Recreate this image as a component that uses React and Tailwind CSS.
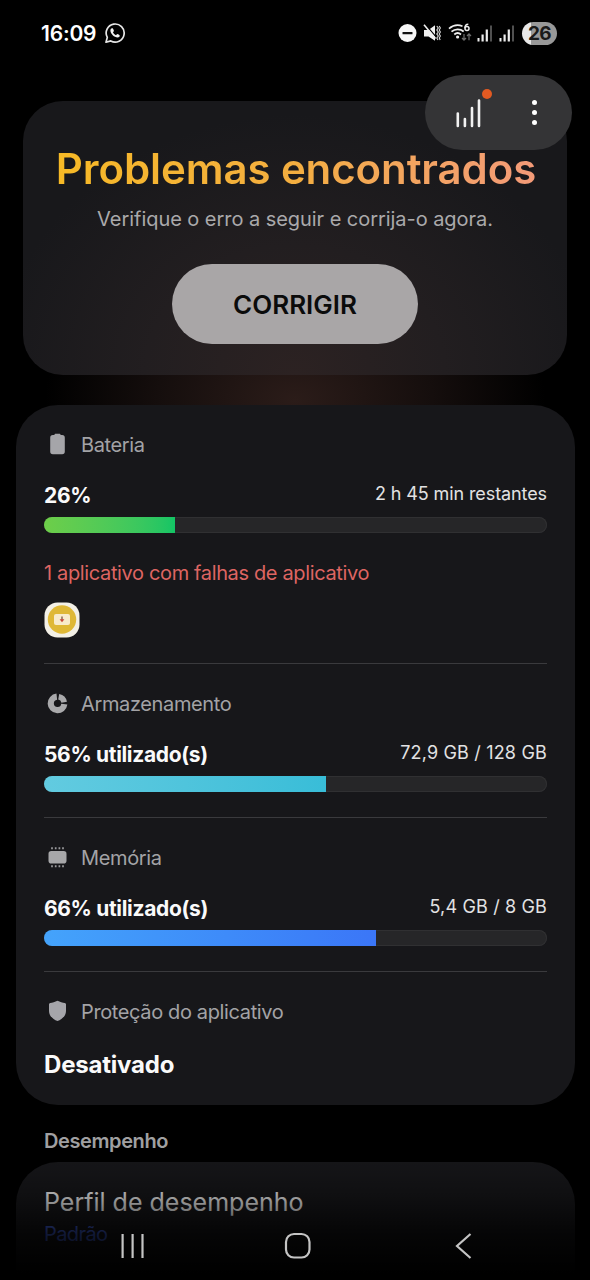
/**
 * Device care screen: status bar, issue banner, health panel and the
 * performance list that fades out under the navigation bar.
 */

function WhatsAppIcon() {
  return (
    <svg width="22" height="22" viewBox="0 0 22 22" fill="none">
      <path
        d="M2 20.2l1.3-4.8A9 9 0 1 1 6.8 18.9L2 20.2z"
        stroke="#e6e6e6"
        strokeWidth="1.7"
        strokeLinejoin="round"
      />
      <path
        d="M7.9 6.2c-.5 0-1.5.8-1.5 2.200 0 3.200 3.900 7 7.200 7 1.300 0 2.200-.9 2.200-1.700 0-.5-2-1.600-2.500-1.600-.4 0-.9 1.100-1.300 1.100-.9 0-3-2-3-2.900 0-.4.900-.8.900-1.300 0-.6-.8-2.700-1.200-2.800z"
        fill="#f2f2f2"
      />
    </svg>
  )
}

function DndIcon() {
  return (
    <svg width="19" height="19" viewBox="0 0 19 19">
      <circle cx="9.5" cy="9" r="9" fill="#f7f7f7" />
      <rect x="4.5" y="8" width="10" height="2.3" rx="0.5" fill="#111" />
    </svg>
  )
}

function MuteIcon() {
  return (
    <svg width="18" height="18" viewBox="0 0 18 18" fill="none">
      <path d="M1 6h4.500L12 1.200v15.600L5.500 12.500H1z" fill="#f0f0f0" />
      <path d="M2 0L13.500 13.500" stroke="#000" strokeWidth="1.200" />
      <path d="M1 .8L12.500 14.500" stroke="#f0f0f0" strokeWidth="1.600" />
      <path
        d="M13.800 2l1.500 2-1.500 2 1.500 2-1.500 2 1.500 2-1.500 2 1.200 2M16.200 2l1.200 2-1.200 2 1.200 2-1.200 2 1.200 2-1.200 2 1 2"
        stroke="#dcdcdc"
        strokeWidth="1.100"
      />
    </svg>
  )
}

function WifiIcon() {
  return (
    <svg width="24" height="20" viewBox="0 0 24 20" fill="none">
      <path
        d="M1 5.600C5 2.200 10 1.400 14.500 3.200M3.500 8.700c3.500-3.100 8.600-3.200 12.200-.2M6.300 11.500c2-1.800 4.700-1.800 6.700 0"
        stroke="#ededed"
        strokeWidth="1.700"
      />
      <circle cx="9.600" cy="14" r="1.600" fill="#ededed" />
      <path d="M20.300 1.200c-2 0-3.400 1.600-3.400 4" stroke="#ededed" strokeWidth="1.500" />
      <circle cx="19" cy="5.600" r="2" stroke="#ededed" strokeWidth="1.500" />
      <path d="M16 11v6M14 15l2 2.200 2-2.200M21 17.200v-6M19 13l2-2.200 2 2.200" stroke="#6d6d6d" strokeWidth="1.200" />
    </svg>
  )
}

function SignalIcon() {
  return (
    <svg width="16" height="17" viewBox="0 0 16 17">
      <rect x="0.500" y="13" width="2" height="3.500" fill="#ededed" />
      <rect x="4.500" y="9.500" width="2.200" height="7" fill="#ededed" />
      <rect x="8.700" y="4.500" width="2.200" height="12" fill="#ededed" />
      <rect x="13" y="0.500" width="2" height="16" fill="#505050" />
    </svg>
  )
}

function BatteryIcon() {
  return (
    <svg width="28" height="24" viewBox="0 0 28 24">
      <path
        d="M10.500 1.500Q10.500 .7 11.300 .7h4.400q.8 0 .8.800v.6h1.700q2.600 0 2.600 2.600v13.900q0 2.600-2.600 2.600H8.800q-2.600 0-2.600-2.600V4.700q0-2.600 2.600-2.600h1.700z"
        fill="#a5a5a9"
      />
    </svg>
  )
}

function StorageIcon() {
  return (
    <svg width="28" height="24" viewBox="0 0 28 24" fill="none">
      {/* three quarters of the ring */}
      <path d="M12.800 4.600A6.800 6.800 0 1 0 20.300 12.200" stroke="#a9a9ab" strokeWidth="6.200" />
      {/* used slice */}
      <path d="M14.700 4.700a6.800 6.800 0 0 1 5.500 5.500" stroke="#a9a9ab" strokeWidth="5.600" />
    </svg>
  )
}

function MemoryIcon() {
  return (
    <svg width="28" height="24" viewBox="0 0 28 24">
      <rect x="4.500" y="5" width="18" height="12.500" rx="2.800" fill="#a7a7a9" />
      <path
        d="M8 1.300v2M11.700 1.300v2M15.400 1.300v2M19 1.300v2M8 19.200v2M11.700 19.200v2M15.400 19.200v2M19 19.200v2"
        stroke="#9a9a9d"
        strokeWidth="1.700"
      />
    </svg>
  )
}

function ShieldIcon() {
  return (
    <svg width="28" height="24" viewBox="0 0 28 24">
      <path
        d="M13.500 .7c2.500 1.300 5.200 2 7.300 2.200q1.200.2 1.200 1.400v6.600c0 5-4 8.300-8.500 10.200C9 19.200 5 15.900 5 10.900V4.300q0-1.200 1.200-1.400C8.300 2.700 11 2 13.500 .7z"
        fill="#a5a5aa"
      />
    </svg>
  )
}

function AppIcon() {
  return (
    <svg width="36" height="36" viewBox="0 0 36 36">
      <rect x="0.500" y="0.500" width="35" height="35" rx="13" fill="#f3f0e6" />
      <circle cx="18" cy="17.500" r="14.200" fill="#dfb836" />
      <rect x="10" y="12" width="16" height="11" rx="2" fill="#f8ebcb" />
      <path d="M18 14.500v3.500" stroke="#8b6a57" strokeWidth="1.500" />
      <path d="M15.600 17.300h4.800L18 20.300z" fill="#c9473a" />
    </svg>
  )
}

function StatusBar() {
  return (
    <div className="flex h-[66px] items-center justify-between pl-[41px] pr-[33px]">
      <div className="flex items-center gap-2">
        <span className="mt-px text-[21px] font-semibold tracking-[-0.2px] text-white">16:09</span>
        <WhatsAppIcon />
      </div>
      <div className="flex items-center">
        <DndIcon />
        <div className="ml-[6px]"><MuteIcon /></div>
        <div className="ml-[7px]"><WifiIcon /></div>
        <div className="ml-[5px]"><SignalIcon /></div>
        <div className="ml-[6px]"><SignalIcon /></div>
        <div className="ml-[7px] flex h-[23px] w-[35px] items-center justify-center rounded-full bg-linear-to-r from-[#e8e8e8] from-26% to-[#989898] to-26%">
          <span className="text-[19px] leading-none font-bold tracking-[-0.7px] text-[#1a1a1a]">26</span>
        </div>
      </div>
    </div>
  )
}

function FloatingActions() {
  return (
    <div className="absolute left-[425px] top-[75px] flex h-[75px] w-[147px] items-center rounded-full bg-[#343436] pl-[30px]">
      <svg width="38" height="40" viewBox="0 0 38 40">
        <path
          d="M2.800 20.500v12.500M9.900 26v7M17 15v18M24 7.500v25.500"
          stroke="#f2f2f2"
          strokeWidth="2.600"
          strokeLinecap="round"
        />
      </svg>
      <div className="absolute left-[57px] top-[14px] h-[10px] w-[10px] rounded-full bg-[#e25a22]" />
      <div className="ml-[39px] flex flex-col gap-[5px]">
        <div className="h-[5px] w-[5px] rounded-full bg-white" />
        <div className="h-[5px] w-[5px] rounded-full bg-white" />
        <div className="h-[5px] w-[5px] rounded-full bg-white" />
      </div>
    </div>
  )
}

function IssueBanner() {
  return (
    <div className="mx-[23px] mt-[35px] flex h-[274px] flex-col items-center rounded-[40px] bg-[radial-gradient(ellipse_300px_260px_at_50%_100%,#2c2222_0%,#221e20_50%,#18181b_100%)]">
      <h1 className="mt-[42px] ml-0.5 bg-linear-to-r from-[#f6b925] via-[#f4ae40] to-[#f39a78] bg-clip-text text-[42px] leading-[52px] font-semibold tracking-[-0.1px] whitespace-nowrap text-transparent">
        Problemas encontrados
      </h1>
      <p className="mt-[12px] text-[20px] leading-[24px] tracking-[-0.05px] whitespace-nowrap text-[#aaa9ab]">
        Verifique o erro a seguir e corrija-o agora.
      </p>
      <button className="mt-[33px] h-[80px] w-[246px] rounded-full bg-[#a9a6a7] pt-px text-[26px] font-semibold text-[#0b0b0b]">
        CORRIGIR
      </button>
    </div>
  )
}

function SectionHeader({ icon, title }) {
  return (
    <div className="flex h-6 items-center gap-[9px]">
      {icon}
      <span className="text-[20px] tracking-[-0.37px] text-[#a3a3a6]">{title}</span>
    </div>
  )
}

function UsageRow({ value, detail, detailClass, percent, barClass }) {
  return (
    <>
      <div className="mt-6 flex h-7 items-center justify-between whitespace-nowrap">
        <span className="mt-0.5 text-[21px] font-bold tracking-[-0.33px] text-[#fafafa]">{value}</span>
        <span className={`mb-1 text-[18px] text-[#e2e2e3] ${detailClass}`}>{detail}</span>
      </div>
      <div className="mt-2 h-4 overflow-hidden rounded-full bg-[#262628] inset-ring inset-ring-[#303032]">
        <div className={`h-full ${barClass}`} style={{ width: `${percent}%` }} />
      </div>
    </>
  )
}

function HealthPanel() {
  return (
    <div className="mr-[15px] ml-4 mt-[30px] h-[700px] rounded-[42px] bg-[#17171a] px-7 pt-7">
      <section className="h-[231px] border-b border-[#3a3a3d]">
        <SectionHeader icon={<BatteryIcon />} title="Bateria" />
        <UsageRow
          value="26%"
          detail="2 h 45 min restantes"
          detailClass="tracking-[-0.1px]"
          percent={26}
          barClass="bg-linear-to-r from-[#6dce49] to-[#12c565]"
        />
        <p className="mt-7 text-[20px] leading-6 tracking-[-0.36px] whitespace-nowrap text-[#de6562]">
          1 aplicativo com falhas de aplicativo
        </p>
        <div className="mt-[17px]">
          <AppIcon />
        </div>
      </section>
      <section className="h-[154px] border-b border-[#3a3a3d] pt-7">
        <SectionHeader icon={<StorageIcon />} title="Armazenamento" />
        <UsageRow
          value="56% utilizado(s)"
          detail="72,9 GB / 128 GB"
          detailClass="tracking-[0.18px]"
          percent={56}
          barClass="bg-linear-to-r from-[#62cbe0] to-[#38bdd8]"
        />
      </section>
      <section className="h-[154px] border-b border-[#3a3a3d] pt-7">
        <SectionHeader icon={<MemoryIcon />} title="Memória" />
        <UsageRow
          value="66% utilizado(s)"
          detail="5,4 GB / 8 GB"
          detailClass="tracking-[0.15px]"
          percent={66}
          barClass="bg-linear-to-r from-[#44a3fb] to-[#3b76f7]"
        />
      </section>
      <section className="pt-7">
        <SectionHeader icon={<ShieldIcon />} title="Proteção do aplicativo" />
        <p className="mt-[27px] text-[24px] leading-7 font-bold tracking-[-0.2px] text-[#fafafa]">Desativado</p>
      </section>
    </div>
  )
}

function PerformanceList() {
  return (
    <>
      <h2 className="mt-6 ml-[44px] text-[20px] leading-6 font-semibold tracking-[-0.4px] text-[#a0a0a2]">
        Desempenho
      </h2>
      <div className="mr-[15px] ml-4 mt-[9px] h-[160px] rounded-t-[42px] bg-[#17171a] px-7 pt-[24px]">
        <p className="text-[25px] leading-8 text-[#fafafa]">Perfil de desempenho</p>
        <p className="mt-1 text-[20px] leading-6 tracking-[-0.6px] text-[#4a6cf0]">Padrão</p>
      </div>
    </>
  )
}

function NavBar() {
  return (
    <div className="absolute inset-x-0 bottom-0 flex h-[130px] items-end bg-[linear-gradient(to_bottom,transparent_0%,rgba(0,0,0,0.35)_35%,rgba(0,0,0,0.78)_65%,#000_95%)] pb-[19px]">
      <svg className="ml-[119px]" width="28" height="30" viewBox="0 0 28 30">
        <path d="M3.600 3v24M13.600 3v24M23.500 3v24" stroke="#c4c4c4" strokeWidth="2.200" />
      </svg>
      <svg className="ml-[136px]" width="30" height="30" viewBox="0 0 30 30">
        <rect x="3" y="3" width="23.500" height="23.500" rx="8" fill="none" stroke="#c4c4c4" strokeWidth="2.200" />
      </svg>
      <svg className="ml-[140px]" width="22" height="30" viewBox="0 0 22 30">
        <path d="M17.500 3L4 15l13.500 12" fill="none" stroke="#c4c4c4" strokeWidth="2.200" />
      </svg>
    </div>
  )
}

export default function App() {
  return (
    <div className="relative h-[1280px] w-[590px] overflow-hidden bg-black bg-[radial-gradient(ellipse_250px_160px_at_295px_400px,#2b1c19_0%,#150e0d_55%,#000_100%)] font-['Inter',sans-serif]">
      <StatusBar />
      <IssueBanner />
      <HealthPanel />
      <PerformanceList />
      <FloatingActions />
      <NavBar />
    </div>
  )
}
